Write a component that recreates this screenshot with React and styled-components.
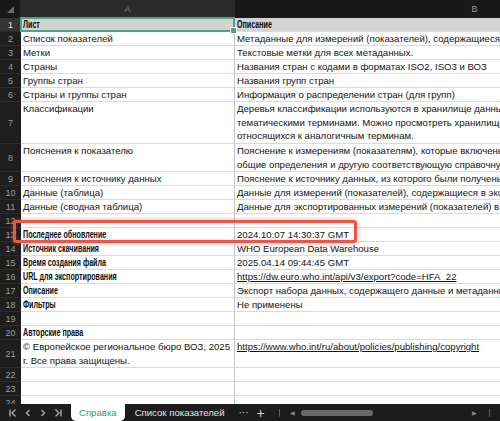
import React from 'react';
import styled, { createGlobalStyle } from 'styled-components';

const Global = createGlobalStyle`
  html, body { margin: 0; padding: 0; background: #1b1b1b; }
  body { font-family: "Liberation Sans", Arial, sans-serif; }
`;

const Page = styled.div`
  width: 500px;
  height: 421px;
  display: flex;
  flex-direction: column;
  overflow: hidden;
  background: #1b1b1b;
`;

const Sheet = styled.div`
  position: relative;
  flex: 1;
  overflow: hidden;
`;

const Grid = styled.div`
  display: grid;
  grid-template-columns: 21px 214px 480px;
  width: 715px;
`;

const CornerCell = styled.div`
  height: 18px;
  background: #181818;
  display: flex;
  align-items: center;
  justify-content: center;
  border-right: 1px solid #2a2a2a;
`;

const ColHead = styled.div`
  height: 18px;
  background: ${p => (p.$active ? '#2a2b2a' : '#181818')};
  color: ${p => (p.$active ? '#3f9c7b' : '#9a9a9a')};
  font-size: 9px;
  display: flex;
  align-items: center;
  justify-content: center;
  border-right: 1px solid #2c2c2c;
  border-bottom: ${p => (p.$active ? '1px solid #3f9c7b' : 'none')};
  box-sizing: border-box;
`;

const RowNum = styled.div`
  height: ${p => p.$h}px;
  box-sizing: border-box;
  background: ${p => (p.$active ? '#333433' : '#1e1e1e')};
  color: ${p => (p.$active ? '#e6e6e6' : '#9c9c9c')};
  border-bottom: 1px solid #2d2d2d;
  font-size: 9px;
  display: flex;
  align-items: center;
  justify-content: center;
`;

const Cell = styled.div`
  position: relative;
  height: ${p => p.$h}px;
  box-sizing: border-box;
  background: ${p => (p.$head ? '#d3d3d3' : '#ffffff')};
  border-bottom: 1px solid #dadada;
  border-right: 1px solid ${p => (p.$first ? '#c6c6c6' : '#dadada')};
  padding: 0 2px;
  font-size: 9.6px;
  line-height: 13.6px;
  color: #141414;
  white-space: nowrap;
  overflow: ${p => (p.$selected ? 'visible' : 'hidden')};
`;

const Strong = styled.span`
  display: inline-block;
  font-weight: 700;
  font-size: 10.2px;
  color: #0c0c0c;
  transform: scaleX(0.7);
  transform-origin: left center;
`;

const Link = styled.span`
  text-decoration: underline;
  text-underline-offset: 1px;
`;

const Selection = styled.div`
  position: absolute;
  left: -1px;
  top: -1px;
  right: -1px;
  bottom: -1px;
  border: 2px solid #49a584;
  pointer-events: none;
  z-index: 2;
`;

const Handle = styled.div`
  position: absolute;
  right: -4px;
  bottom: -4px;
  width: 5px;
  height: 5px;
  background: #49a584;
  border: 1px solid #fff;
`;

const Highlight = styled.div`
  position: absolute;
  left: 13px;
  top: 220px;
  width: 344px;
  height: 23px;
  box-sizing: border-box;
  border: 3px solid #e4594c;
  border-radius: 3px;
  box-shadow: 0 0 5px rgba(228, 89, 76, 0.55), inset 0 0 3px rgba(228, 89, 76, 0.35);
  pointer-events: none;
  z-index: 3;
`;

const TabBar = styled.div`
  height: 17px;
  flex-shrink: 0;
  background: #1c1c1c;
  display: flex;
  align-items: stretch;
  color: #b4b4b4;
  font-size: 9.6px;
`;

const NavGroup = styled.div`
  display: flex;
  align-items: center;
  gap: 5px;
  padding: 0 6px 0 8px;
`;

const NavIcon = styled.svg`
  width: 10px;
  height: 10px;
  stroke: #a8a8a8;
  fill: none;
  stroke-width: 1.4;
`;

const Tab = styled.div`
  display: flex;
  align-items: center;
  padding: 0 ${p => (p.$active ? '8px' : '10px')};
  background: ${p => (p.$active ? '#ffffff' : 'transparent')};
  color: ${p => (p.$active ? '#3a9a78' : '#e4e4e4')};
  border-radius: 0 0 5px 5px;
  white-space: nowrap;
  margin-left: ${p => (p.$active ? '2px' : '0')};
`;

const TabTool = styled.div`
  display: flex;
  align-items: center;
  padding: 0 4px;
  color: #cfcfcf;
  font-size: ${p => p.$size || 10}px;
`;

const Sep = styled.div`
  width: 1px;
  height: 8px;
  background: #5a5a5a;
  align-self: center;
  margin: 0 ${p => p.$m || 6}px;
`;

const Scroll = styled.div`
  flex: 1;
  display: flex;
  align-items: center;
  gap: 6px;
  padding-right: 4px;
`;

const Arrow = styled.span`
  font-size: 6px;
  color: #8a8a8a;
`;

const Thumb = styled.div`
  width: 72px;
  height: 6px;
  border-radius: 3px;
  background: #6a6a6a;
`;

const Spacer = styled.div`
  flex: 1;
`;

const rows = [
  { a: 'Лист', b: 'Описание', head: true, bold: true },
  { a: 'Список показателей', b: 'Метаданные для измерений (показателей), содержащиеся в экспорте' },
  { a: 'Метки', b: 'Текстовые метки для всех метаданных.' },
  { a: 'Страны', b: 'Названия стран с кодами в форматах ISO2, ISO3 и ВОЗ' },
  { a: 'Группы стран', b: 'Названия групп стран' },
  { a: 'Страны и группы стран', b: 'Информация о распределении стран (для групп)' },
  {
    a: 'Классификации',
    h: 42,
    b: [
      'Деревья классификации используются в хранилище данных',
      'тематическими терминами. Можно просмотреть хранилище',
      'относящихся к аналогичным терминам.',
    ],
  },
  {
    a: 'Пояснения к показателю',
    h: 28,
    b: [
      'Пояснение к измерениям (показателям), которые включены',
      'общие определения и другую соответствующую справочную',
    ],
  },
  { a: 'Пояснения к источнику данных', b: 'Пояснение к источнику данных, из которого были получены данные' },
  { a: 'Данные (таблица)', b: 'Данные для измерений (показателей), содержащиеся в экспорте' },
  { a: 'Данные (сводная таблица)', b: 'Данные для экспортированных измерений (показателей) в сводной таблице' },
  { a: '', b: '' },
  { a: 'Последнее обновление', b: '2024.10.07 14:30:37 GMT', bold: true },
  { a: 'Источник скачивания', b: 'WHO European Data Warehouse', bold: true },
  { a: 'Время создания файла', b: '2025.04.14 09:44:45 GMT', bold: true },
  { a: 'URL для экспортирования', b: 'https://dw.euro.who.int/api/v3/export?code=HFA_22', bold: true, link: true },
  { a: 'Описание', b: 'Экспорт набора данных, содержащего данные и метаданные', bold: true },
  { a: 'Фильтры', b: 'Не применены', bold: true },
  { a: '', b: '' },
  { a: 'Авторские права', b: '', bold: true },
  {
    a: ['© Европейское региональное бюро ВОЗ, 2025', 'г. Все права защищены.'],
    h: 28,
    b: 'https://www.who.int/ru/about/policies/publishing/copyright',
    link: true,
  },
  { a: '', b: '' },
  { a: '', b: '' },
  { a: '', b: '' },
];

function Lines({ value, bold }) {
  if (Array.isArray(value)) {
    return value.map((line, i) => <div key={i}>{line}</div>);
  }
  if (bold && value) return <Strong>{value}</Strong>;
  return value;
}

function Corner() {
  return (
    <svg width="9" height="9" viewBox="0 0 9 9">
      <path d="M8 1 L8 8 L1 8 Z" fill="#6b6b6b" />
    </svg>
  );
}

export default function App() {
  return (
    <Page>
      <Global />
      <Sheet>
        <Grid>
          <CornerCell>
            <Corner />
          </CornerCell>
          <ColHead $active>A</ColHead>
          <ColHead>B</ColHead>
          {rows.map((r, i) => {
            const h = r.h || 14;
            const num = i + 1;
            return (
              <React.Fragment key={num}>
                <RowNum $h={h} $active={num === 1}>{num}</RowNum>
                <Cell $h={h} $first $head={r.head} $selected={num === 1}>
                  <Lines value={r.a} bold={r.bold} />
                  {num === 1 && (
                    <Selection>
                      <Handle />
                    </Selection>
                  )}
                </Cell>
                <Cell $h={h} $head={r.head}>
                  {r.link ? <Link>{r.b}</Link> : <Lines value={r.b} bold={r.head} />}
                </Cell>
              </React.Fragment>
            );
          })}
        </Grid>
        <Highlight />
      </Sheet>
      <TabBar>
        <NavGroup>
          <NavIcon viewBox="0 0 10 10">
            <path d="M2 1.5 V8.5 M7.5 1.5 L4 5 L7.5 8.5" />
          </NavIcon>
          <NavIcon viewBox="0 0 10 10">
            <path d="M6.5 2 L3.5 5 L6.5 8" />
          </NavIcon>
          <NavIcon viewBox="0 0 10 10">
            <path d="M3.5 2 L6.5 5 L3.5 8" />
          </NavIcon>
          <NavIcon viewBox="0 0 10 10">
            <path d="M2.5 1.5 L6 5 L2.5 8.5 M8 1.5 V8.5" />
          </NavIcon>
        </NavGroup>
        <Tab $active>Справка</Tab>
        <Tab>Список показателей</Tab>
        <TabTool>···</TabTool>
        <TabTool $size={14}>+</TabTool>
        <Sep $m={10} />
        <Scroll>
          <Arrow>◀</Arrow>
          <Thumb />
          <Spacer />
          <Arrow>▶</Arrow>
          <Sep $m={0} />
        </Scroll>
      </TabBar>
    </Page>
  );
}
